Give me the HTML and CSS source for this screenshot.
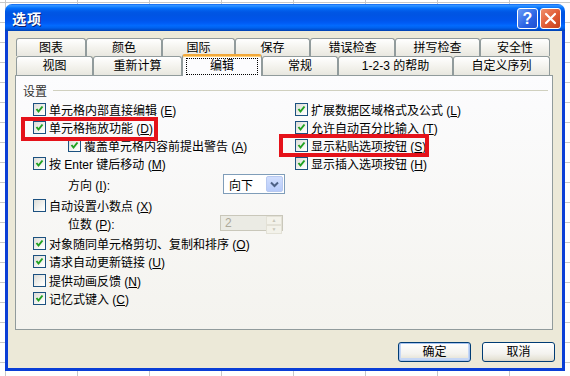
FILE: index.html
```html
<!DOCTYPE html>
<html lang="zh-CN">
<head>
    <meta charset="UTF-8">
    <title>选项</title>
    <link rel="stylesheet" href="styles.css">
</head>
<body>
    <div class="window">
        <div class="titlebar">
            <span class="title">选项</span>
            <div class="caption-btns">
                <span class="cap help">?</span>
                <span class="cap close">
                    <svg width="13" height="13" viewBox="0 0 13 13"><path d="M2 2 L11 11 M11 2 L2 11" stroke="#fff" stroke-width="2.2" stroke-linecap="round"/></svg>
                </span>
            </div>
        </div>

        <div class="body">
            <div class="tabs">
                <div class="tab-row">
                    <div class="tab" style="width:70px">图表</div>
                    <div class="tab" style="width:76px">颜色</div>
                    <div class="tab" style="width:73px">国际</div>
                    <div class="tab" style="width:75px">保存</div>
                    <div class="tab" style="width:85px">错误检查</div>
                    <div class="tab" style="width:85px">拼写检查</div>
                    <div class="tab" style="width:70px">安全性</div>
                </div>
                <div class="tab-row front">
                    <div class="tab" style="width:77px">视图</div>
                    <div class="tab" style="width:89px">重新计算</div>
                    <div class="tab active" style="width:80px"><span class="focus">编辑</span></div>
                    <div class="tab" style="width:76px">常规</div>
                    <div class="tab" style="width:115px">1-2-3 的帮助</div>
                    <div class="tab" style="width:97px">自定义序列</div>
                </div>
            </div>

            <div class="panel">
                <div class="group-title">
                    <span>设置</span>
                    <i class="rule"></i>
                </div>

                <div class="options">
                    <div class="col">
                        <label class="opt"><span class="check on"></span><span>单元格内部直接编辑 (<u>E</u>)</span></label>
                        <label class="opt"><span class="check on"></span><span>单元格拖放功能 (<u>D</u>)</span></label>
                        <label class="opt sub"><span class="check on"></span><span>覆盖单元格内容前提出警告 (<u>A</u>)</span></label>
                        <label class="opt"><span class="check on"></span><span>按 Enter 键后移动 (<u>M</u>)</span></label>
                        <div class="field">
                            <span class="field-label">方向 (<u>I</u>):</span>
                            <div class="combo">向下<span class="combo-btn"><svg width="9" height="7" viewBox="0 0 9 7"><path d="M1 1.5 L4.5 5 L8 1.5" fill="none" stroke="#4d6185" stroke-width="2"/></svg></span></div>
                        </div>
                        <label class="opt gap"><span class="check"></span><span>自动设置小数点 (<u>X</u>)</span></label>
                        <div class="field spin-row">
                            <span class="field-label narrow">位数 (<u>P</u>):</span>
                            <div class="spin">2<span class="spin-btns"><i>&#9650;</i><i>&#9660;</i></span></div>
                        </div>
                        <label class="opt gap"><span class="check on"></span><span>对象随同单元格剪切、复制和排序 (<u>O</u>)</span></label>
                        <label class="opt"><span class="check on"></span><span>请求自动更新链接 (<u>U</u>)</span></label>
                        <label class="opt gap1"><span class="check"></span><span>提供动画反馈 (<u>N</u>)</span></label>
                        <label class="opt"><span class="check on"></span><span>记忆式键入 (<u>C</u>)</span></label>
                    </div>
                    <div class="col">
                        <label class="opt"><span class="check on"></span><span>扩展数据区域格式及公式 (<u>L</u>)</span></label>
                        <label class="opt"><span class="check on"></span><span>允许自动百分比输入 (<u>T</u>)</span></label>
                        <label class="opt"><span class="check on"></span><span>显示粘贴选项按钮 (<u>S</u>)</span></label>
                        <label class="opt"><span class="check on"></span><span>显示插入选项按钮 (<u>H</u>)</span></label>
                    </div>
                </div>

                <div class="mark mark-left"></div>
                <div class="mark mark-right"></div>
            </div>

            <div class="actions">
                <button class="btn default">确定</button>
                <button class="btn">取消</button>
            </div>
        </div>
    </div>
</body>
</html>
```

FILE: styles.css
```css
html, body {
    margin: 0;
    padding: 0;
}

body {
    width: 570px;
    height: 376px;
    overflow: hidden;
    font-family: "Liberation Sans", "Noto Sans CJK SC", sans-serif;
    font-size: 12px;
    color: #000;
    background-color: #fff;
    /* excel sheet behind the dialog */
    background-image:
        repeating-linear-gradient(to right, #c8c8c8 0, #c8c8c8 1px, transparent 1px, transparent 72px),
        repeating-linear-gradient(to bottom, #c8c8c8 0, #c8c8c8 1px, transparent 1px, transparent 20px);
    background-position: 5px 0, 0 2px;
}

.window {
    width: 560px;
    margin: 4px 0 0 5px;
}

.titlebar {
    height: 27px;
    border-radius: 7px 7px 0 0;
    background: linear-gradient(to bottom, #0058ee 0%, #3593ff 4%, #288eff 8%, #127dff 12%, #036ffc 16%, #0262ee 22%, #0057e5 30%, #0054e3 40%, #0055eb 60%, #005bf5 70%, #026afe 80%, #0062ef 88%, #0052d6 94%, #0040ab 100%);
    display: flex;
    align-items: center;
    justify-content: space-between;
    padding: 0 4px 0 7px;
    box-sizing: border-box;
}

.title {
    color: #fff;
    font-weight: bold;
    font-size: 14px;
    text-shadow: 1px 1px 0 #0a1f6e;
    letter-spacing: 1px;
}

.caption-btns {
    display: flex;
    gap: 2px;
    margin-top: 2px;
}

.cap {
    width: 21px;
    height: 21px;
    box-sizing: border-box;
    border: 1px solid #fff;
    border-radius: 3px;
    display: flex;
    align-items: center;
    justify-content: center;
}

.help {
    background: linear-gradient(135deg, #6b9cf7, #2a63e4 60%, #1f4fd0);
    color: #fff;
    font-weight: bold;
    font-size: 16px;
}

.close {
    background: linear-gradient(135deg, #f0906c, #e05a34 55%, #c4401d);
}

.body {
    background: #ece9d8;
    border: 3px solid #0a3ed6;
    border-top: none;
    height: 340px;
    box-sizing: border-box;
    padding: 7px 9px 0 7px;
}

.tabs {
    margin-left: 1px;
}

.tab-row {
    display: flex;
    height: 18px;
}

.tab-row.front {
    height: 19px;
    position: relative;
    z-index: 2;
}

.tab {
    box-sizing: border-box;
    border: 1px solid #919b9c;
    border-bottom: none;
    border-radius: 3px 3px 0 0;
    background: linear-gradient(to bottom, #fff, #f2f1eb 60%, #e8e7e0);
    display: flex;
    align-items: center;
    justify-content: center;
    line-height: 14px;
}

.tab.active {
    height: 22px;
    margin-top: -2px;
    background: #fcfcfe;
    border-top: 2px solid #f2a83a;
    box-shadow: inset 0 1px 0 #ffd27a;
}

.focus {
    border: 1px dotted #000;
    width: 70px;
    height: 15px;
    text-align: center;
    line-height: 15px;
    margin-top: 1px;
}

.panel {
    position: relative;
    width: 538px;
    height: 255px;
    box-sizing: border-box;
    border: 1px solid #919b9c;
    background: linear-gradient(to bottom, #fcfcfe, #f4f3ee);
    padding: 6px 0 0 7px;
}

.group-title {
    display: flex;
    align-items: center;
    height: 16px;
    color: #333;
}

.rule {
    flex: 1;
    height: 1px;
    background: #d0d0bf;
    margin: 1px 4px 0 6px;
}

.options {
    display: grid;
    grid-template-columns: 262px 1fr;
    padding-left: 10px;
    margin-top: 2px;
}

.col {
    display: flex;
    flex-direction: column;
}

.opt {
    height: 18px;
    display: flex;
    align-items: center;
    white-space: pre;
}

.opt.sub {
    padding-left: 35px;
}

.opt.gap {
    margin-top: 2px;
}

.opt.gap1 {
    margin-top: 1px;
}

.check {
    width: 13px;
    height: 13px;
    margin-right: 3px;
    box-sizing: border-box;
    border: 1px solid #1c5180;
    background: linear-gradient(135deg, #dcdcd7, #fbfbf9 80%, #fff);
    flex: none;
}

.check.on {
    background-image: url("data:image/svg+xml;utf8,<svg xmlns='http://www.w3.org/2000/svg' width='11' height='11'><path d='M2.5 5 L4.5 7.5 L8.5 2.5' fill='none' stroke='%2321a121' stroke-width='2'/></svg>"), linear-gradient(135deg, #dcdcd7, #fbfbf9 80%, #fff);
}

u {
    text-decoration: underline;
}

.field {
    display: flex;
    align-items: center;
    height: 20px;
    margin-top: 2px;
    white-space: pre;
}

.field-label {
    width: 190px;
    padding-left: 35px;
    box-sizing: border-box;
}

.field-label.narrow {
    width: 187px;
}

.combo {
    width: 62px;
    height: 20px;
    box-sizing: border-box;
    border: 1px solid #7f9db9;
    background: #fff;
    display: flex;
    align-items: center;
    justify-content: space-between;
    padding-left: 5px;
}

.combo-btn {
    width: 17px;
    height: 16px;
    margin-right: 1px;
    border-radius: 2px;
    background: linear-gradient(to bottom, #d1defd, #b7cbfa);
    border: 1px solid #b8c9f0;
    box-sizing: border-box;
    display: flex;
    align-items: center;
    justify-content: center;
}

.spin-row {
    height: 18px;
    margin-top: 0;
}

.spin {
    width: 63px;
    height: 16px;
    box-sizing: border-box;
    border: 1px solid #c9c7ba;
    background: #ebebe4;
    color: #aca899;
    display: flex;
    align-items: center;
    justify-content: space-between;
    padding-left: 4px;
}

.spin-btns {
    width: 16px;
    height: 14px;
    display: flex;
    flex-direction: column;
}

.spin-btns i {
    flex: 1;
    font-style: normal;
    font-size: 5px;
    line-height: 7px;
    text-align: center;
    color: #c9c7ba;
    background: #f3f2ea;
    border: 1px solid #e3e1d6;
    box-sizing: border-box;
}

/* red highlight boxes drawn over the options */
.mark {
    position: absolute;
    box-sizing: border-box;
    border: 4px solid #e5121a;
}

.mark-left {
    left: 5px;
    top: 41px;
    width: 137px;
    height: 24px;
}

.mark-right {
    left: 263px;
    top: 58px;
    width: 150px;
    height: 23px;
}

.actions {
    display: flex;
    justify-content: flex-end;
    gap: 11px;
    margin-top: 12px;
    margin-right: -2px;
}

.btn {
    width: 73px;
    height: 20px;
    box-sizing: border-box;
    border: 1px solid #003c74;
    border-radius: 3px;
    background: linear-gradient(to bottom, #fff, #f3f2ee 60%, #e6e3d6 90%, #d6d0c5);
    font-family: "Liberation Sans", "Noto Sans CJK SC", sans-serif;
    font-size: 12px;
    padding: 0;
    line-height: 16px;
    color: #000;
}

.btn.default {
    box-shadow: inset 0 0 0 1px #a9c4f0, inset 0 -1px 0 2px #c6d7f5;
}
```
